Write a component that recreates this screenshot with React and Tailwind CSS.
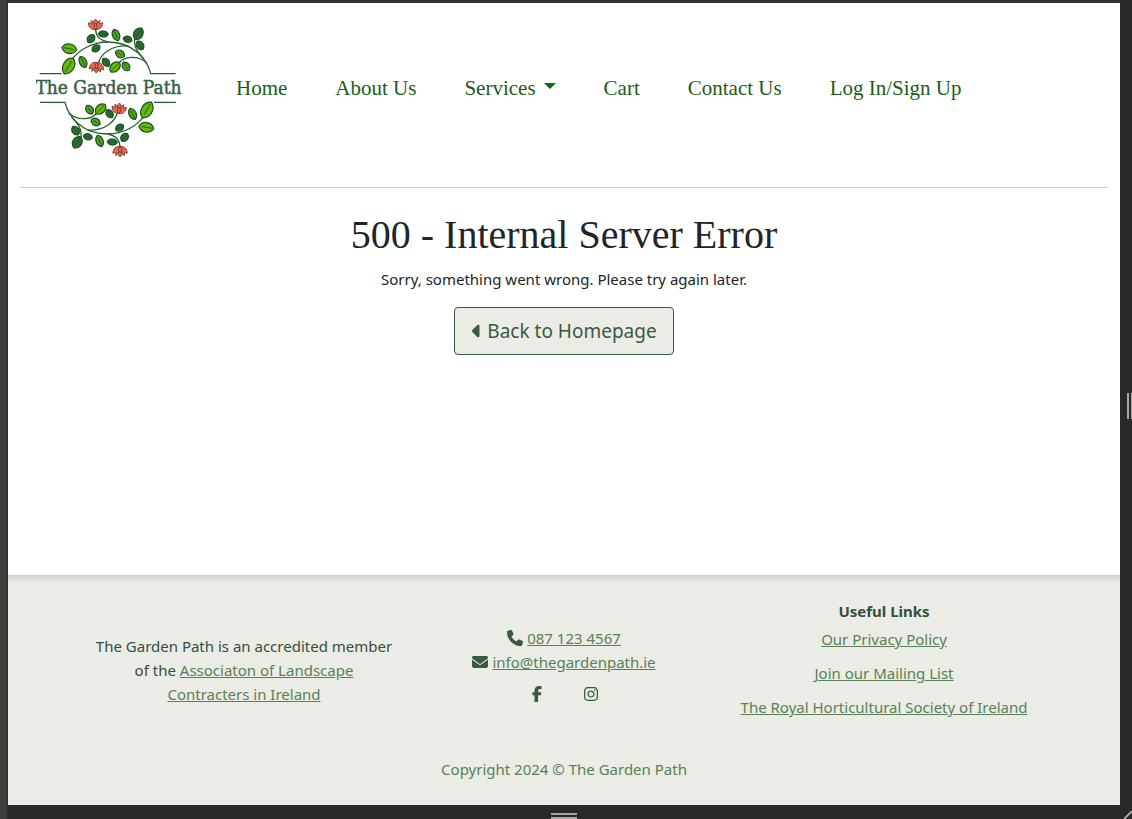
import React from "react";
import { FaCaretLeft, FaEnvelope, FaFacebookF, FaInstagram, FaPhone } from "react-icons/fa6";

const DARK = "#2f7038";
const LIGHT = "#68b70c";
const MID = "#55a81a";

// x, y, length, width, angle, colour
const leaves = [
  [69.3, 48.7, 15, 9.5, 10, LIGHT],
  [68.7, 66, 18, 11, -60, LIGHT],
  [83, 62, 12, 7, 62, MID],
  [96, 48.3, 9, 6.5, -35, DARK],
  [91, 38.7, 9.5, 7, -50, DARK],
  [103.3, 34, 10, 6, 5, DARK],
  [116, 35, 12, 7, 68, MID],
  [127.7, 39.3, 9, 6, 15, DARK],
  [138.3, 33.7, 13, 9, -58, DARK],
  [140, 45.3, 10, 7, 55, DARK],
  [106, 62.3, 9.5, 6.5, 55, DARK],
  [120, 54, 10, 7, 28, MID],
  [115, 67, 13, 8.5, -45, LIGHT],
  [126, 66.3, 10, 7, 55, MID],
];

function Leaf({ x, y, length, width, angle, fill }) {
  const a = length / 2;
  const b = width * 0.67;
  return (
    <g transform={`translate(${x} ${y}) rotate(${angle})`} stroke="#174f1d" strokeLinejoin="round">
      <path
        d={`M${-a} 0 C${-a * 0.6} ${-b} ${a * 0.6} ${-b} ${a} 0 C${a * 0.6} ${b} ${-a * 0.6} ${b} ${-a} 0Z`}
        fill={fill}
        strokeWidth="1.2"
      />
      <path d={`M${-a * 0.75} 0 H${a * 0.6}`} fill="none" strokeWidth="0.8" />
    </g>
  );
}

function Flower({ x, y, angle }) {
  return (
    <g
      transform={`translate(${x} ${y}) rotate(${angle})`}
      fill="#ee6352"
      stroke="#5b3a22"
      strokeWidth="0.8"
      strokeLinejoin="round"
    >
      <path d="M0 -5.5 L2.4 -2.5 L0 3 L-2.4 -2.5Z" />
      <path d="M0 5 C-4.5 5.5 -7 2.5 -7.2 -1.8 L-4.2 -0.8 L-4.4 -4.2 C-1.6 -2.4 0 1 0 5Z" />
      <path d="M0 5 C4.5 5.5 7 2.5 7.2 -1.8 L4.2 -0.8 L4.4 -4.2 C1.6 -2.4 0 1 0 5Z" />
      <path d="M0 5 C-2.2 3 -2 0.5 0 -1.2 C2 0.5 2.2 3 0 5Z" />
    </g>
  );
}

function Vine() {
  return (
    <g>
      <g fill="none" stroke="#25602c" strokeWidth="1.3">
        <path d="M39.7 73.7 H61.7 M175.7 73.7 H150.7 C147 59 133 42 108 42 C92 42 78 50 70 62" />
        <path d="M108 42 C99 40 96 36 95.5 29" />
        <path d="M135 37 C133 46 137 52 144 59" />
        <path d="M98 64 C101 53 112 45 128 46" />
        <path d="M119 63 C124 56 138 55 147 63" />
      </g>
      {leaves.map(([x, y, length, width, angle, fill]) => (
        <Leaf key={`${x}-${y}`} x={x} y={y} length={length} width={width} angle={angle} fill={fill} />
      ))}
      <Flower x={95.5} y={24.5} angle={0} />
      <Flower x={96.5} y={67.5} angle={185} />
    </g>
  );
}

function Logo() {
  return (
    <svg viewBox="36 16 146 144" className="h-36 w-[146px]" role="img" aria-label="The Garden Path">
      <Vine />
      <g transform="rotate(180 107.8 88)">
        <Vine />
      </g>
      <text
        x="108.5"
        y="94"
        textAnchor="middle"
        fontSize="19"
        fill="#3a5f46"
        stroke="#3a5f46"
        strokeWidth="0.5"
        fontFamily='"DejaVu Serif Condensed", "DejaVu Serif", serif'
      >
        The Garden Path
      </text>
    </svg>
  );
}

function TextLink({ children }) {
  return (
    <a href="#" className="text-[#588157] underline">
      {children}
    </a>
  );
}

function Header() {
  return (
    <header className="mx-3 flex items-center border-b border-[#c4c9c5] px-4 pt-[13px] pb-[27px]">
      <a href="#" className="shrink-0">
        <Logo />
      </a>
      <nav className="ml-[54px] flex items-center gap-12 font-['Liberation_Serif',serif] text-[21px] leading-8 whitespace-nowrap text-[#1c5c20]">
        <a href="#">Home</a>
        <a href="#">About Us</a>
        <button type="button" className="flex items-center gap-2">
          Services
          <svg viewBox="0 0 12 10" className="h-[10px] w-3" aria-hidden="true">
            <path d="M0 0H12L6 6Z" fill="#116b0b" />
          </svg>
        </button>
        <a href="#">Cart</a>
        <a href="#">Contact Us</a>
        <a href="#">Log In/Sign Up</a>
      </nav>
    </header>
  );
}

function Footer() {
  return (
    <footer className="bg-[#ebece5] text-center text-[#344e41]">
      <div className="h-2 bg-linear-to-b from-[#cfd0ca] to-[#ebece5]" />
      <div className="mx-auto grid max-w-[960px] grid-cols-3 items-center pt-4">
        <p className="px-2 pt-[22px]">
          The Garden Path is an accredited member of the{" "}
          <TextLink>Associaton of Landscape Contracters in Ireland</TextLink>
        </p>
        <div className="pt-[14px]">
          <p className="flex items-center justify-center gap-1">
            <FaPhone className="size-4 text-[#3a5a40]" />
            <TextLink>087 123 4567</TextLink>
          </p>
          <p className="flex items-center justify-center gap-1">
            <FaEnvelope className="size-4 text-[#3a5a40]" />
            <TextLink>info@thegardenpath.ie</TextLink>
          </p>
          <div className="mt-2 flex h-6 items-center justify-center gap-[38px] text-[#3a5a40]">
            <a href="#" aria-label="Facebook">
              <FaFacebookF className="size-4" />
            </a>
            <a href="#" aria-label="Instagram">
              <FaInstagram className="size-4" />
            </a>
          </div>
        </div>
        <div>
          <h2 className="font-bold">Useful Links</h2>
          <ul className="mt-1 space-y-[10px] whitespace-nowrap">
            <li>
              <TextLink>Our Privacy Policy</TextLink>
            </li>
            <li>
              <TextLink>Join our Mailing List</TextLink>
            </li>
            <li>
              <TextLink>The Royal Horticultural Society of Ireland</TextLink>
            </li>
          </ul>
        </div>
      </div>
      <p className="mt-[38px] pb-6 text-[#588157]">Copyright 2024 © The Garden Path</p>
    </footer>
  );
}

export default function App() {
  return (
    <div className="flex min-h-screen flex-col bg-[#28292a] font-['Noto_Sans',sans-serif] text-[15px] leading-6 text-[#212529]">
      <div className="flex grow">
        <div className="w-2 shrink-0 border-r border-[#2b2b2b] bg-[#3c3c3c]" />
        <div className="flex grow flex-col">
          <div className="h-[3px] bg-[#333333]" />
          <div className="flex grow flex-col bg-white">
            <Header />
            <main className="flex grow flex-col items-center px-3 pt-[23px] text-center">
              <h1 className="font-['Liberation_Serif',serif] text-[40px] leading-12">
                500 - Internal Server Error
              </h1>
              <p className="mt-2">Sorry, something went wrong. Please try again later.</p>
              <a
                href="#"
                className="mt-4 flex h-12 items-center gap-1 rounded-sm border border-[#3a5a40] bg-[#ebece5] px-4 text-[19px] text-[#3a5a40]"
              >
                <FaCaretLeft className="h-5 w-3" />
                Back to Homepage
              </a>
            </main>
            <Footer />
          </div>
          <div className="flex h-[14px] flex-col items-center justify-end gap-[2px]">
            <div className="h-[2px] w-[26px] bg-[#a5a6a8]" />
            <div className="h-[2px] w-[26px] bg-[#a5a6a8]" />
          </div>
        </div>
        <div className="flex w-3 shrink-0 flex-col items-end">
          <div className="flex grow items-center gap-[2px]">
            <div className="h-[26px] w-[2px] bg-[#a5a6a8]" />
            <div className="h-[26px] w-px bg-[#a5a6a8]" />
          </div>
          <svg viewBox="0 0 8 8" className="size-2" aria-hidden="true">
            <path d="M0 8L8 0" stroke="#b5b6b8" strokeWidth="1.6" />
          </svg>
        </div>
      </div>
    </div>
  );
}
